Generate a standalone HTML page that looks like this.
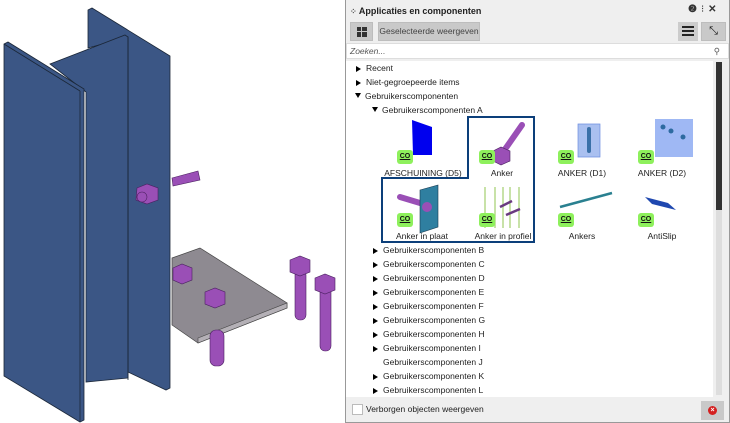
<!DOCTYPE html>
<html><head><meta charset="utf-8"><style>
*{margin:0;padding:0;box-sizing:border-box}
body{width:730px;height:423px;overflow:hidden;background:#fff;font-family:"Liberation Sans",sans-serif;font-size:9px;color:#222;position:relative}
.abs{position:absolute}
.panel{left:345px;top:0;width:385px;height:423px;background:#efefef;border-left:1px solid #999;border-right:1px solid #999}
.btn{background:#c9c9c9;border:1px solid #bdbdbd}
.row{position:absolute;font-size:8.5px;color:#222;white-space:nowrap}
.tri{display:inline-block;width:0;height:0;border-top:3.5px solid transparent;border-bottom:3.5px solid transparent;border-left:5px solid #000;margin-right:5px;vertical-align:-1px}
.trid{display:inline-block;width:0;height:0;border-left:3.5px solid transparent;border-right:3.5px solid transparent;border-top:5px solid #000;margin-right:4px;vertical-align:1px}
.co{position:absolute;width:16px;height:14px;background:#8ef05c;border-radius:3px;font-size:7px;font-weight:bold;text-align:center;line-height:14px;text-decoration:underline;color:#111}
.lbl{position:absolute;font-size:8.5px;text-align:center;width:90px}
</style></head><body>
<svg class="abs" style="left:0;top:0" width="345" height="423" viewBox="0 0 345 423">
<g stroke="#1b2738" stroke-width="0.8" fill="#3b5685">
<polygon points="88,10 92,8 170,56 170,388 166,390 128,372 128,37 88,48"/>
<polygon points="50,64 125,35 128,37 128,378 86,382 86,92"/>
<line x1="128" y1="37" x2="128" y2="380"/>
<polygon points="4,44 8,42 84,89 84,420 80,422 4,376"/>
<line x1="80" y1="91" x2="80" y2="421"/>
<line x1="4" y1="44" x2="80" y2="91"/>
</g>
<polygon points="172,258 200,248 287,303 287,308 198,343 172,325" fill="#8e8a91" stroke="#444" stroke-width="0.7"/>
<polygon points="198,338 287,303 287,308 198,343" fill="#b4b0b6" stroke="#444" stroke-width="0.6"/>
<g fill="#9a4fb6" stroke="#4a2060" stroke-width="0.6">
<path d="M172,178 L198,171 L200,180 L173,186 Z"/>
<polygon points="137,188 147,184 158,188 158,200 147,204 136,200"/><circle cx="142" cy="197" r="5"/>
<rect x="210" y="330" width="14" height="36" rx="6"/>
<rect x="295" y="270" width="11" height="50" rx="5"/>
<rect x="320" y="285" width="11" height="66" rx="5"/>
<polygon points="173,268 182,264 192,268 192,280 182,284 173,280"/>
<polygon points="205,292 215,288 225,292 225,304 215,308 205,304"/>
<polygon points="290,260 300,256 310,260 310,272 300,276 290,272"/>
<polygon points="315,278 325,274 335,278 335,290 325,294 315,290"/>
</g>
</svg>
<div class="abs panel"></div>
<div class="abs" style="left:350px;top:6px;font-size:9px;font-weight:bold;color:#222">
<span style="font-size:8px;color:#555">⁘</span> Applicaties en componenten</div>
<div class="abs" style="left:688px;top:4px;font-size:10px;font-weight:bold;color:#333;letter-spacing:4px">❷<span style="font-weight:normal">⁝</span>✕</div>
<div class="abs btn" style="left:350px;top:22px;width:23px;height:19px"><div class="abs" style="left:6px;top:4px;width:10px;height:10px;background:
linear-gradient(#c9c9c9,#c9c9c9) 4px 0/1px 10px no-repeat,linear-gradient(#c9c9c9,#c9c9c9) 0 4px/10px 1px no-repeat,#333"></div></div>
<div class="abs btn" style="left:378px;top:22px;width:102px;height:19px;font-size:8.5px;color:#444;text-align:center;line-height:17px">Geselecteerde weergeven</div>
<div class="abs" style="left:678px;top:22px;width:20px;height:19px;background:#ccc"><div class="abs" style="left:4px;top:4px;width:12px;height:10px;border-top:2px solid #222;border-bottom:2px solid #222"></div><div class="abs" style="left:4px;top:8px;width:12px;height:2px;background:#222"></div></div>
<div class="abs btn" style="left:701px;top:22px;width:25px;height:19px;font-size:11px;text-align:center;line-height:17px;color:#111">⤡</div>
<div class="abs" style="left:346px;top:43px;width:383px;height:16px;background:#fff;border:1px solid #ddd;font-style:italic;font-size:8.5px;color:#555;padding:2px 3px">Zoeken...<span style="position:absolute;right:8px;font-style:normal">⚲</span></div>
<div class="abs" style="left:346px;top:61px;width:367px;height:336px;background:#fff"></div>
<div class="abs" style="left:716px;top:62px;width:6px;height:333px;background:#ddd"></div>
<div class="abs" style="left:716px;top:62px;width:6px;height:148px;background:#333"></div>
<div class="row" style="left:356px;top:63px"><span class="tri"></span>Recent</div>
<div class="row" style="left:356px;top:77px"><span class="tri"></span>Niet-gegroepeerde items</div>
<div class="row" style="left:355px;top:91px"><span class="trid"></span>Gebruikerscomponenten</div>
<div class="row" style="left:372px;top:105px"><span class="trid"></span>Gebruikerscomponenten A</div>
<svg class="abs" style="left:380px;top:115px" width="160" height="130"><path d="M88,2 H154 V127 H2 V63 H88 Z" fill="none" stroke="#0c3f7a" stroke-width="2"/>
<polygon points="32,5 52,12 52,40 33,40" fill="#0000ee"/>
<line x1="121" y1="40" x2="142" y2="10" stroke="#9a4fb6" stroke-width="6" stroke-linecap="round"/>
<polygon points="113,36 121,32 130,36 130,46 121,50 113,46" fill="#9a4fb6" stroke="#4a2060" stroke-width="0.6"/>
<line x1="20" y1="82" x2="40" y2="88" stroke="#9a4fb6" stroke-width="6" stroke-linecap="round"/>
<polygon points="40,75 58,70 58,112 40,118" fill="#2f7fa0" stroke="#1a3a50" stroke-width="0.6"/>
<circle cx="47" cy="92" r="5" fill="#9a4fb6"/>
<g stroke="#b5d88a" stroke-width="1.5"><line x1="105" y1="72" x2="105" y2="113"/><line x1="115" y1="72" x2="115" y2="113"/><line x1="123" y1="72" x2="123" y2="113"/><line x1="130" y1="72" x2="130" y2="113"/><line x1="139" y1="72" x2="139" y2="113"/></g>
<g stroke="#6a3a80" stroke-width="2.5"><line x1="120" y1="92" x2="132" y2="86"/><line x1="126" y1="100" x2="140" y2="94"/></g>
</svg>
<svg class="abs" style="left:550px;top:115px" width="160" height="110">
<polygon points="28,9 50,9 50,42 28,42" fill="#aac0f0" stroke="#6d8ee0" stroke-width="0.7"/>
<rect x="37" y="12" width="4" height="26" rx="2" fill="#3a70a8"/>
<rect x="105" y="4" width="38" height="38" fill="#9fb8f4"/>
<circle cx="113" cy="12" r="2.5" fill="#2d6aa0"/><circle cx="121" cy="16" r="2.5" fill="#2d6aa0"/><circle cx="133" cy="22" r="2.5" fill="#2d6aa0"/>
<line x1="10" y1="92" x2="62" y2="78" stroke="#2a8090" stroke-width="2.5"/>
<polygon points="95,82 118,88 126,95 102,89" fill="#1f48b0"/>
</svg>
<div class="co" style="left:397px;top:150px">CO</div><div class="co" style="left:479px;top:150px">CO</div><div class="co" style="left:558px;top:150px">CO</div><div class="co" style="left:638px;top:150px">CO</div>
<div class="co" style="left:397px;top:213px">CO</div><div class="co" style="left:479px;top:213px">CO</div><div class="co" style="left:558px;top:213px">CO</div><div class="co" style="left:638px;top:213px">CO</div>
<div class="lbl" style="left:378px;top:168px">AFSCHUINING (D5)</div>
<div class="lbl" style="left:457px;top:168px">Anker</div>
<div class="lbl" style="left:537px;top:168px">ANKER (D1)</div>
<div class="lbl" style="left:617px;top:168px">ANKER (D2)</div>
<div class="lbl" style="left:377px;top:231px">Anker in plaat</div>
<div class="lbl" style="left:458px;top:231px">Anker in profiel</div>
<div class="lbl" style="left:537px;top:231px">Ankers</div>
<div class="lbl" style="left:617px;top:231px">AntiSlip</div>
<div class="row" style="left:373px;top:245px"><span class="tri"></span>Gebruikerscomponenten B</div>
<div class="row" style="left:373px;top:259px"><span class="tri"></span>Gebruikerscomponenten C</div>
<div class="row" style="left:373px;top:273px"><span class="tri"></span>Gebruikerscomponenten D</div>
<div class="row" style="left:373px;top:287px"><span class="tri"></span>Gebruikerscomponenten E</div>
<div class="row" style="left:373px;top:301px"><span class="tri"></span>Gebruikerscomponenten F</div>
<div class="row" style="left:373px;top:315px"><span class="tri"></span>Gebruikerscomponenten G</div>
<div class="row" style="left:373px;top:329px"><span class="tri"></span>Gebruikerscomponenten H</div>
<div class="row" style="left:373px;top:343px"><span class="tri"></span>Gebruikerscomponenten I</div>
<div class="row" style="left:383px;top:357px">Gebruikerscomponenten J</div>
<div class="row" style="left:373px;top:371px"><span class="tri"></span>Gebruikerscomponenten K</div>
<div class="row" style="left:373px;top:385px"><span class="tri"></span>Gebruikerscomponenten L</div>
<div class="abs" style="left:352px;top:404px;width:11px;height:11px;background:#fff;border:1px solid #bbb"></div>
<div class="row" style="left:366px;top:404px">Verborgen objecten weergeven</div>
<div class="abs" style="left:701px;top:401px;width:23px;height:19px;background:#c9c9c9"><div class="abs" style="left:7px;top:5px;width:9px;height:9px;border-radius:50%;background:#d42020;color:#fff;font-size:7px;line-height:9px;text-align:center;font-weight:bold">×</div></div>
<div class="abs" style="left:345px;top:422px;width:385px;height:1px;background:#999"></div>
</body></html>
